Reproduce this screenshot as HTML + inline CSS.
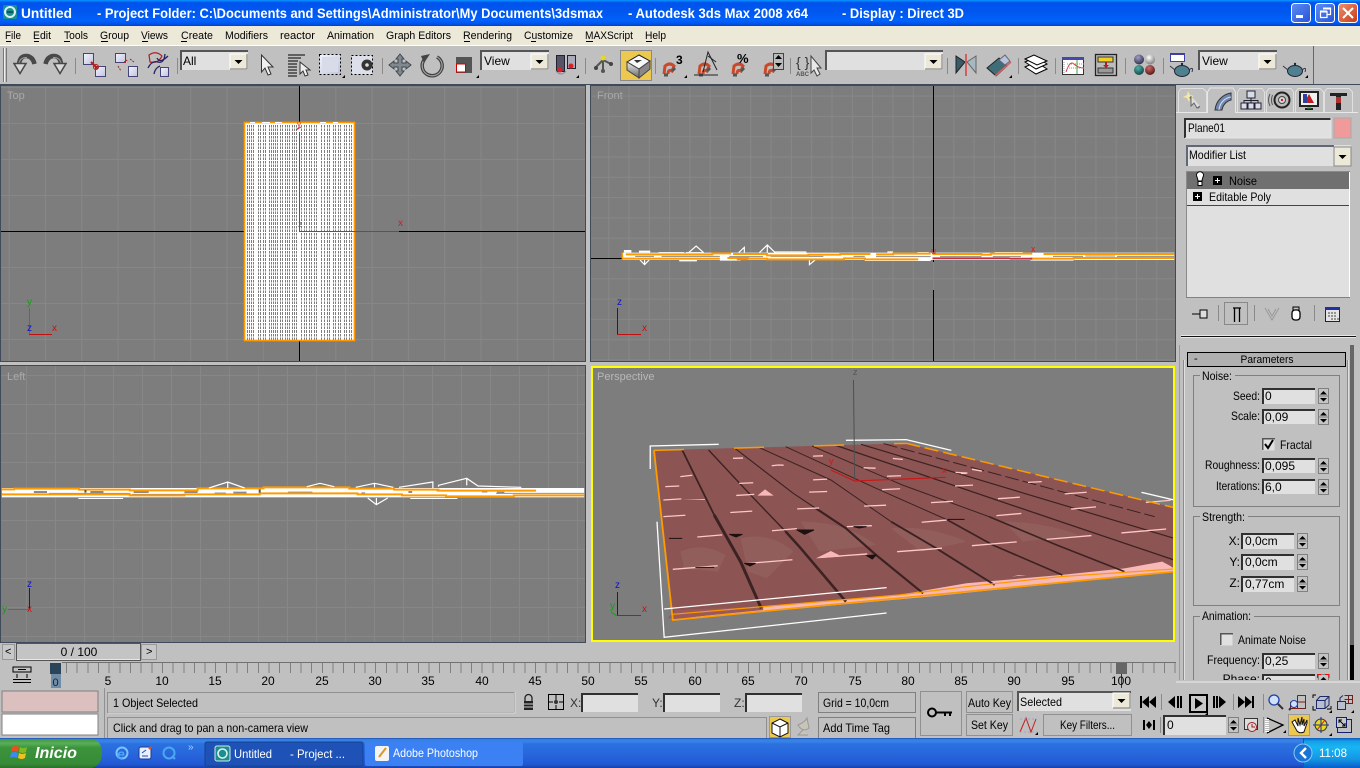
<!DOCTYPE html>
<html lang="en"><head><meta charset="utf-8"><title>3ds Max</title>
<style>
html,body{margin:0;padding:0;background:#c0c0c0;overflow:hidden}
svg{display:block}
text{font-family:"Liberation Sans",sans-serif;font-size:11px;fill:#000}
.f{fill:#e0e0e0}
.d{fill:none;stroke:#303030;stroke-width:2}
.l{fill:none;stroke:#e6e6e6;stroke-width:1}
.b{fill:none;stroke:#808080;stroke-width:1}
.sep{stroke:#8a8a8a;stroke-width:1}
.n *{vector-effect:non-scaling-stroke}
.c{shape-rendering:crispEdges}
.w{fill:#fff;font-weight:bold;font-size:14px}
</style></head><body>
<svg width="1360" height="768" viewBox="0 0 1360 768" xmlns="http://www.w3.org/2000/svg">
<defs>
<linearGradient id="tb" x1="0" y1="0" x2="0" y2="1"><stop offset="0" stop-color="#0997ff"/><stop offset=".1" stop-color="#0053ee"/><stop offset=".5" stop-color="#0058f0"/><stop offset=".8" stop-color="#0062fb"/><stop offset=".92" stop-color="#0052e6"/><stop offset="1" stop-color="#0040d0"/></linearGradient>
<linearGradient id="task" x1="0" y1="0" x2="0" y2="1"><stop offset="0" stop-color="#1f4cb0"/><stop offset=".05" stop-color="#3682e5"/><stop offset=".12" stop-color="#3883e5"/><stop offset=".2" stop-color="#2b71e0"/><stop offset=".63" stop-color="#2663da"/><stop offset=".88" stop-color="#2258d5"/><stop offset="1" stop-color="#1941a5"/></linearGradient>
<linearGradient id="st" x1="0" y1="0" x2="0" y2="1"><stop offset="0" stop-color="#3c9a3c"/><stop offset=".15" stop-color="#5aae5a"/><stop offset=".3" stop-color="#3b943b"/><stop offset=".85" stop-color="#378b37"/><stop offset="1" stop-color="#2a702a"/></linearGradient>
<linearGradient id="tray" x1="0" y1="0" x2="0" y2="1"><stop offset="0" stop-color="#0c59b9"/><stop offset=".1" stop-color="#139ee9"/><stop offset=".3" stop-color="#18b5f2"/><stop offset=".7" stop-color="#1397e5"/><stop offset="1" stop-color="#095bc9"/></linearGradient>
<linearGradient id="wb" x1="0" y1="0" x2="1" y2="1"><stop offset="0" stop-color="#5f8df2"/><stop offset="1" stop-color="#2553d8"/></linearGradient>
<linearGradient id="wc" x1="0" y1="0" x2="1" y2="1"><stop offset="0" stop-color="#ee9070"/><stop offset="1" stop-color="#c83a14"/></linearGradient>
<linearGradient id="cube" x1="0" y1="0" x2="0" y2="1"><stop offset="0" stop-color="#eee"/><stop offset="1" stop-color="#666"/></linearGradient>
<linearGradient id="rb" x1="0" y1="0" x2="1" y2="1"><stop offset="0" stop-color="#f4f4ff"/><stop offset="1" stop-color="#c0c4dc"/></linearGradient>
<radialGradient id="m1" cx=".4" cy=".3" r=".8"><stop offset="0" stop-color="#a0a0c8"/><stop offset="1" stop-color="#22223c"/></radialGradient>
<radialGradient id="m2" cx=".4" cy=".3" r=".8"><stop offset="0" stop-color="#fff"/><stop offset="1" stop-color="#707070"/></radialGradient>
<radialGradient id="m3" cx=".4" cy=".3" r=".8"><stop offset="0" stop-color="#50b0a8"/><stop offset="1" stop-color="#0c3a3a"/></radialGradient>
<radialGradient id="m4" cx=".4" cy=".3" r=".8"><stop offset="0" stop-color="#d06868"/><stop offset="1" stop-color="#481010"/></radialGradient>
<pattern id="gt" patternUnits="userSpaceOnUse" x="299" y="231" width="36.3" height="36"><path d="M.5 0V36M0 .5H36.3" stroke="#878787" fill="none"/></pattern>
<pattern id="gf" patternUnits="userSpaceOnUse" x="933" y="258" width="20.3" height="20.3"><path d="M.5 0V21M0 .5H21" stroke="#878787" fill="none"/></pattern>
<pattern id="gl" patternUnits="userSpaceOnUse" x="26" y="491" width="29" height="29"><path d="M.5 0V29M0 .5H29" stroke="#878787" fill="none"/></pattern>
<g id="sp"><rect x=".5" y=".5" width="10" height="15" fill="#c4c4c4" stroke="#808080"/><path d="M1 8H10" stroke="#808080"/><path d="M5.500 3L9 6.500H2zM2 10H9L5.500 13.500z"/></g>
<g id="dd"><rect x="0" y="0" width="17" height="15" fill="#ece9d8"/><path d="M0 15V0H17" stroke="#fff" fill="none"/><path d="M17 0V15H0" stroke="#777" fill="none"/><path d="M4.500 6H12.500L8.500 10z"/></g>
</defs>

<!-- base -->
<rect width="1360" height="768" fill="#c0c0c0"/>

<!-- title bar -->
<rect width="1360" height="26" fill="url(#tb)"/>
<rect x="3" y="5" width="14" height="14" rx="2" fill="#1a8f8f"/><circle cx="10" cy="12" r="5" fill="none" stroke="#d8f0f0" stroke-width="2"/><path d="M7 12H13" stroke="#0c5a5a" stroke-width="2"/>
<text class="w" x="21" y="18" textLength="51" lengthAdjust="spacingAndGlyphs">Untitled</text>
<text class="w" x="97" y="18" textLength="506" lengthAdjust="spacingAndGlyphs">- Project Folder: C:\Documents and Settings\Administrator\My Documents\3dsmax</text>
<text class="w" x="628" y="18" textLength="180" lengthAdjust="spacingAndGlyphs">- Autodesk 3ds Max 2008 x64</text>
<text class="w" x="842" y="18" textLength="122" lengthAdjust="spacingAndGlyphs">- Display : Direct 3D</text>
<rect x="1291.500" y="3.500" width="19" height="19" rx="3" fill="url(#wb)" stroke="#fff"/><rect x="1296" y="15" width="7" height="3" fill="#fff"/>
<rect x="1315.500" y="3.500" width="19" height="19" rx="3" fill="url(#wb)" stroke="#fff"/><path d="M1323.500 8.500H1330.500V14.500H1327M1320.500 11.500H1327V17.500H1320.500Z" fill="none" stroke="#fff" stroke-width="1.200"/><path d="M1323 8.500H1331M1320 11.500H1327" stroke="#fff" stroke-width="2"/>
<rect x="1338.500" y="3.500" width="19" height="19" rx="3" fill="url(#wc)" stroke="#fff"/><path d="M1343 8L1353 18M1353 8L1343 18" stroke="#fff" stroke-width="2"/>

<!-- menu bar -->
<rect y="26" width="1360" height="19" fill="#ece9d8"/><rect y="45" width="1360" height="1" fill="#fff"/>
<g>
<text x="5" y="39" textLength="16" lengthAdjust="spacingAndGlyphs">File</text>
<text x="33" y="39" textLength="18" lengthAdjust="spacingAndGlyphs">Edit</text>
<text x="64" y="39" textLength="24" lengthAdjust="spacingAndGlyphs">Tools</text>
<text x="100" y="39" textLength="29" lengthAdjust="spacingAndGlyphs">Group</text>
<text x="141" y="39" textLength="27" lengthAdjust="spacingAndGlyphs">Views</text>
<text x="181" y="39" textLength="32" lengthAdjust="spacingAndGlyphs">Create</text>
<text x="225" y="39" textLength="43" lengthAdjust="spacingAndGlyphs">Modifiers</text>
<text x="280" y="39" textLength="35" lengthAdjust="spacingAndGlyphs">reactor</text>
<text x="327" y="39" textLength="47" lengthAdjust="spacingAndGlyphs">Animation</text>
<text x="386" y="39" textLength="65" lengthAdjust="spacingAndGlyphs">Graph Editors</text>
<text x="463" y="39" textLength="49" lengthAdjust="spacingAndGlyphs">Rendering</text>
<text x="524" y="39" textLength="49" lengthAdjust="spacingAndGlyphs">Customize</text>
<text x="585" y="39" textLength="48" lengthAdjust="spacingAndGlyphs">MAXScript</text>
<text x="645" y="39" textLength="21" lengthAdjust="spacingAndGlyphs">Help</text>
<path class="c" d="M6 41.500H11M34 41.500H39M64 41.500H70M101 41.500H108M142 41.500H148M181 41.500H187M464 41.500H470M531 41.500H536M586 41.500H593M646 41.500H652" stroke="#000"/>
</g>

<!-- toolbar -->
<rect y="46" width="1313" height="38" fill="#c0c0c0"/>
<path d="M1313.500 46V84" stroke="#666"/><path d="M0 84.500H1360" stroke="#3f4b5b"/>
<path d="M3.500 48V82M6.500 48V82" stroke="#777"/><path d="M4.500 48V82" stroke="#eee"/>
<path class="sep c" d="M75.500 58V74M177.500 58V74M382.500 58V74M585.500 58V74M655.500 58V74M790.500 58V74M947.500 58V74M1018.500 58V74M1055.500 58V74M1125.500 58V74M1163.500 58V74"/>

<!-- undo / redo -->
<g id="und"><path d="M19 64Q20 55.500 27 56Q33 57 34.500 64" fill="none" stroke="#484848" stroke-width="4.500"/><path d="M19 63Q20.500 57 27 57.500" fill="none" stroke="#9a9a9a" stroke-width="1"/><path d="M14 63.500H26L20 73.500Z" fill="#d8d8d8" stroke="#484848" stroke-width="1.500"/></g>
<use href="#und" transform="translate(80,0) scale(-1,1)"/>

<!-- link, unlink, bind -->
<rect x="83.500" y="53.500" width="10" height="11" fill="url(#rb)" stroke="#44447a"/><rect x="95.500" y="66.500" width="10" height="10" fill="url(#rb)" stroke="#44447a"/><path d="M91 62L98 69" stroke="#b02020" stroke-width="2"/><circle cx="96" cy="67" r="2.500" fill="none" stroke="#b02020"/>
<rect x="115.500" y="53.500" width="10" height="9" fill="url(#rb)" stroke="#44447a"/><rect x="128.500" y="66.500" width="9" height="10" fill="url(#rb)" stroke="#44447a"/><path d="M124 63Q126 58 128 62M118 66L121 71M130 59L134 62" stroke="#b02020" fill="none" stroke-dasharray="2 1"/>
<path d="M149 55Q156 50 162 56Q158 64 150 62Z" fill="none" stroke="#b02020" stroke-width="1.200"/><path d="M148 68Q152 60 158 62T165 54M157 58Q160 64 168 56M154 74Q155 68 160 66" fill="none" stroke="#24246a" stroke-width="1.300"/><rect x="160.500" y="67.500" width="8" height="9" fill="url(#rb)" stroke="#44447a"/>

<!-- All dropdown -->
<rect x="180" y="50" width="68" height="20" class="f"/><path class="c" d="M181 70V51H248" fill="none" stroke="#555" stroke-width="2"/>
<text x="183" y="65" style="font-size:12px">All</text><use href="#dd" x="230" y="54"/>

<!-- select -->
<path d="M261.500 55V72L265 68L268 75L271 74L268 67L273 67Z" fill="#f0f0f0" stroke="#333"/>
<path class="c" d="M288 55H305M288 58H301M288 61H298M288 64H297M288 67H297M288 70H297M288 73H297M288 76H297" stroke="#000"/><path d="M300 62V74L303 71L305 76L308 75L306 70L310 70Z" fill="#f0f0f0" stroke="#333"/>
<rect x="319.500" y="54.500" width="21" height="20" fill="url(#rb)" stroke="#000" stroke-dasharray="2 2"/><rect x="322" y="57" width="16" height="15" fill="#d8dce8"/><path d="M342 78L345 78L345 75Z"/>
<rect x="351.500" y="55.500" width="21" height="19" fill="#dde0ea" stroke="#000" stroke-dasharray="2 2"/><circle cx="367" cy="65" r="5.500" fill="#333"/><circle cx="367" cy="65" r="1.800" fill="#ddd"/>
<!-- move -->
<path d="M400 54L404 59H402V63H406V61L411 65L406 69V67H402V71H404L400 76L396 71H398V67H394V69L389 65L394 61V63H398V59H396Z" fill="#808890" stroke="#404850"/>
<!-- rotate -->
<path d="M424 60A10 10 0 1 0 437 57" fill="none" stroke="#404040" stroke-width="3.500"/><path d="M424 60A10 10 0 1 0 437 57" fill="none" stroke="#a0a0a0" stroke-width="1.200"/><path d="M430 54L424 63L421 56Z" fill="#444"/>
<!-- scale -->
<rect x="456" y="57" width="16" height="16" fill="#555"/><rect x="456.500" y="64" width="9" height="8" fill="#fff" stroke="#c00"/><path d="M476 78L479 78L479 75Z"/>
<!-- View dd -->
<rect x="480" y="50" width="69" height="20" class="f"/><path class="c" d="M481 70V51H549" fill="none" stroke="#555" stroke-width="2"/>
<text x="484" y="65" style="font-size:12px">View</text><use href="#dd" x="531" y="54"/>
<!-- use pivot -->
<rect x="556.500" y="55.500" width="8" height="16" fill="#556" stroke="#223"/><rect x="567.500" y="55.500" width="8" height="13" fill="#aab" stroke="#223"/><circle cx="560" cy="70" r="2.500" fill="#e02020"/><circle cx="571" cy="66" r="2.500" fill="#e02020"/><path d="M556 71Q561 77 566 71" fill="none" stroke="#88a"/><path d="M576 78L579 78L579 75Z"/>
<!-- manipulate -->
<path d="M603 60L596 67M603 60L611 64M603 60V71" stroke="#555" stroke-width="2"/><circle cx="603" cy="58" r="2.500" fill="#e8d820"/><circle cx="596" cy="68" r="2" fill="#444"/><circle cx="611" cy="64" r="2" fill="#444"/><circle cx="603" cy="71" r="2" fill="#555"/>
<!-- keyboard cube (active) -->
<rect x="620.500" y="50.500" width="31" height="30" fill="#edc850" stroke="#8a8a8a"/>
<path d="M627 62L639 55L650 61L639 69Z" fill="#f8f8f8" stroke="#222"/><path d="M627 62V70L639 78V69Z" fill="url(#cube)" stroke="#444"/><path d="M639 69V78L650 69V61Z" fill="#888" stroke="#444"/><path d="M634 60L642 60L637 63Z" fill="#333"/>
<!-- snaps -->
<g id="mag"><path d="M664 74L665 66Q670 62 674 66L672 71Q668 69 668 74" fill="none" stroke="#c84a2a" stroke-width="3"/><path d="M664 75L668 75M672 71L675 68" stroke="#555" stroke-width="3"/></g>
<text x="676" y="64" style="font-size:12px;font-weight:bold">3</text><path d="M684 78L687 78L687 75Z"/>
<use href="#mag" x="35"/><path d="M694 75H718M703 72L708 52L717 70" fill="none" stroke="#222"/><path d="M708 56L716 62" stroke="#222"/>
<use href="#mag" x="69"/><text x="737" y="63" style="font-size:13px;font-weight:bold">%</text>
<use href="#mag" x="101"/><rect x="773.500" y="53.500" width="10" height="16" fill="#bbb" stroke="#444"/><path d="M778.500 55L782 59H775ZM775 63H782L778.500 67Z"/>
<!-- named sel -->
<text x="796" y="67" style="font-size:14px;fill:#333">{ }</text><text x="796" y="76" style="font-size:6px;font-weight:bold;fill:#555">ABC</text><path d="M811 56V73L814 70L817 76L820 74L817 68L821 68Z" fill="#e8e8e8" stroke="#444"/>
<rect x="825" y="50" width="118" height="20" class="f"/><path class="c" d="M826 70V51H943" fill="none" stroke="#555" stroke-width="2"/><use href="#dd" x="925" y="54"/>
<!-- mirror -->
<path d="M956 56L965 62L956 73Z" fill="#3a5a6a" stroke="#222"/><path d="M976 56L967 62L976 73Z" fill="#a8b8c0" stroke="#666"/><path d="M966 54V76" stroke="#d06060" stroke-width="2"/>
<!-- align -->
<path d="M987 68L999 58L1007 66L996 76Z" fill="#3f6e78" stroke="#222"/><path d="M999 60L1005 55L1010 61L1005 65Z" fill="#b8c4dc" stroke="#667"/><path d="M995 76L1011 62" stroke="#d86060" stroke-width="1.500"/><path d="M1009 78L1012 78L1012 75Z"/>
<!-- layers -->
<path d="M1025 67L1036 62L1047 69L1036 74Z" fill="#fff" stroke="#000"/><path d="M1025 62L1036 57L1047 64L1036 69Z" fill="#fff" stroke="#000"/><path d="M1025 59L1034 55L1047 61L1037 65Z" fill="#fff" stroke="#000"/>
<!-- curve editor -->
<rect x="1062.500" y="57.500" width="21" height="17" fill="#fff" stroke="#333"/><rect x="1062" y="57" width="22" height="3" fill="#4848a8"/><path d="M1066 72Q1070 60 1074 64T1084 68" fill="none" stroke="#d04040"/><path d="M1077 60V74" stroke="#40a040"/><path d="M1064 62V74M1067 64H1084M1067 68H1084" stroke="#9090b0" stroke-dasharray="1 1"/>
<!-- schematic -->
<rect x="1095.500" y="54.500" width="21" height="21" fill="#bcbcbc" stroke="#222" stroke-width="1.300"/><rect x="1098" y="57" width="15" height="5" fill="#f0d020" stroke="#333"/><rect x="1098" y="68" width="15" height="5" fill="#9a9a9a" stroke="#333"/><path d="M1106 62V67" stroke="#b02020" stroke-width="2"/><path d="M1103 65H1109L1106 68Z" fill="#b02020"/>
<!-- material -->
<circle cx="1139" cy="59.500" r="5" fill="url(#m1)"/><circle cx="1150" cy="59.500" r="5" fill="url(#m2)"/><circle cx="1139" cy="70" r="5" fill="url(#m3)"/><circle cx="1150" cy="70" r="5" fill="url(#m4)"/>
<!-- render setup -->
<rect x="1170.500" y="53.500" width="14" height="8" fill="#fff" stroke="#4040a0"/><rect x="1170" y="53" width="15" height="2" fill="#4040a0"/>
<g id="pot"><ellipse cx="1182" cy="71" rx="7.500" ry="5.500" fill="#4e8090" stroke="#223"/><path d="M1175 70L1170 66M1189 70Q1194 66 1192 72" fill="none" stroke="#335"/><circle cx="1182" cy="64" r="1.200" fill="#223"/></g>
<rect x="1198" y="50" width="79" height="20" class="f"/><path class="c" d="M1199 70V51H1277" fill="none" stroke="#555" stroke-width="2"/><text x="1202" y="65" style="font-size:12px">View</text><use href="#dd" x="1259" y="54"/>
<use href="#pot" x="113"/><path d="M1305 78L1308 78L1308 75Z"/>

<!-- viewport frame -->
<rect x="0" y="85" width="586" height="277" fill="#3f4b5b"/><rect x="590" y="85" width="586" height="277" fill="#3f4b5b"/><rect x="0" y="365" width="586" height="278" fill="#3f4b5b"/>

<!-- TOP -->
<rect x="1" y="86" width="584" height="275" fill="#7d7d7d"/><rect x="1" y="86" width="584" height="275" fill="url(#gt)"/>
<path class="c" d="M299.500 86V361M1 231.500H585" stroke="#000"/>
<rect x="244" y="122" width="111" height="219" fill="#fff"/>
<path class="c" stroke="#7d7d7d" stroke-dasharray="2.600 1" fill="none" d="M247.500 125V340M249.500 125V340M251.500 125V340M253.500 125V340M258.500 125V340M260.500 125V340M263.500 125V340M265.500 125V340M269.500 125V340M271.500 125V340M273.500 125V340M275.500 125V340M277.500 125V340M280.500 125V340M282.500 125V340M285.500 125V340M287.500 125V340M289.500 125V340M292.500 125V340M294.500 125V340M296.500 125V340M301.500 125V340M304.500 125V340M306.500 125V340M309.500 125V340M311.500 125V340M314.500 125V340M316.500 125V340M321.500 125V340M324.500 125V340M327.500 125V340M329.500 125V340M333.500 125V340M335.500 125V340M338.500 125V340M340.500 125V340M344.500 125V340M346.500 125V340M349.500 125V340M351.500 125V340"/>
<rect x="244.500" y="122.500" width="110" height="218" fill="none" stroke="#ff9a00" stroke-width="1.600"/>
<path class="c" d="M250 122.500H255M262 122.500H270M275 122.500H282M320 122.500H326M333 122.500H338" stroke="#fff"/>
<path class="c" d="M299.500 132V231.500M299 231.500H399" fill="none" stroke="#d82020"/>
<path d="M296 130L301 127" stroke="#d02020"/>
<text x="297" y="127" style="font-size:8px;fill:#d02020">y</text><text x="398" y="226" style="font-size:10px;fill:#d02020">x</text><text x="298" y="227" style="font-size:9px;fill:#666">z</text>
<path class="c" d="M29.500 334V308" stroke="#10a010"/><path class="c" d="M29 334.500H52" stroke="#c01010"/>
<text x="27" y="305" style="font-size:10px;fill:#10a010">y</text><text x="27" y="331" style="font-size:10px;fill:#1010d0">z</text><text x="52" y="331" style="font-size:10px;fill:#d01010">x</text>
<text x="7" y="99" style="fill:#a9a9a9">Top</text>

<!-- FRONT -->
<rect x="591" y="86" width="584" height="275" fill="#7d7d7d"/><rect x="591" y="86" width="584" height="275" fill="url(#gf)"/>
<path class="c" d="M933.500 86V262M933.500 290V361M591 258.500H622" stroke="#000"/><path class="c" d="M933.500 262V290" stroke="#c87a10"/>
<g class="n" transform="translate(590,230) scale(.3764,.3333)">
<rect x="85" y="68" width="1467" height="22" fill="#fff"/>
<path d="M90 60H110V68H90ZM130 62H160V68H130ZM182 66H250V68H182ZM255 66H300V68H255ZM490 64H575V68H490ZM790 64H805V68H790ZM870 66H900V68H870ZM1075 66H1150V68H1075ZM237 90H284V94H237ZM345 90H400V92H345ZM730 90H905V93H730ZM1170 90H1285V92H1170Z" fill="#fff"/>
<path d="M262 68L282 48L302 68M395 68L410 52V68M450 68L471 45L492 68M471 45V68M133 90L145 104L157 90M145 90V104M583 90V104L598 90" fill="none" stroke="#fff" stroke-width="1.200"/>
<path d="M120 79H170M190 79H345M370 80H460M480 79H620M700 79H730M760 80H905M930 80H1040M1070 80H1145M1230 79H1310M1316 78H1395M1400 79H1552" stroke="#8a8a8a" stroke-width="1" fill="none"/>
<path d="M95 73H325V70H375M380 72H470V76H580V74H665V72H745M760 73H805V71H905M910 72H1040V74H1065V71H1175M1205 72H1552M85 86H345M365 84H420V86H470V88H675V85H730V88H872M1170 86H1285V84H1552" fill="none" stroke="#ff9a00" stroke-width="2"/>
<path d="M390 87H420" stroke="#ff8a00" stroke-width="2.500"/>
<path d="M910 85H1115M1115 86H1175" stroke="#c83040" stroke-width="1.800"/>
<path d="M86 68V90" stroke="#ff9a00" stroke-width="1.500"/>
</g>
<text x="931" y="254" style="font-size:9px;fill:#d02020">u</text><text x="1031" y="252" style="font-size:9px;fill:#d02020">x</text>
<path class="c" d="M617.500 334V308" stroke="#1010c0"/><path class="c" d="M617 334.500H641" stroke="#c01010"/>
<text x="617" y="305" style="font-size:10px;fill:#1010d0">z</text><text x="642" y="331" style="font-size:10px;fill:#d01010">x</text>
<text x="597" y="99" style="fill:#a9a9a9">Front</text>

<!-- LEFT -->
<rect x="1" y="366" width="584" height="276" fill="#7d7d7d"/><rect x="1" y="366" width="584" height="276" fill="url(#gl)"/>
<g class="n" transform="translate(0,470) scale(.3764,.3333)">
<rect x="5" y="54" width="1547" height="28" fill="#fff"/>
<path d="M90 66H125M240 66H275M355 66H395M490 66H525M620 68H655M765 68H830M960 70H970M1085 66H1095M1320 68H1340" stroke="#8a8a8a" stroke-width="2" fill="none"/>
<path d="M130 70H345M350 73H490M570 69H600M1160 63H1180M1280 66H1295M1318 70H1552" stroke="#909090" stroke-width="1" fill="none"/>
<path d="M5 58H40M36 56H210V59H345V61H525V55H700V52H928V56H1047V59H1165V62H1424M5 73H345V76H490V73H690V70H950V73H1068V76H1185V79H1365V76H1552" fill="none" stroke="#ff9a00" stroke-width="2"/>
<path d="M208 84H327V87H208ZM1090 84H1215V87H1090Z" fill="#fff"/>
<path d="M555 54L605 36L650 54M605 36V54M815 50L850 40L888 50M945 52L995 40L1045 52M995 40V52M1060 52L1150 36V54M1165 50V46L1240 25L1270 48L1385 52M1240 25V46M977 84L1000 104L1030 84M1000 84V104" fill="none" stroke="#fff" stroke-width="1.200"/>
<path d="M227 60V68M690 58V68" stroke="#555" stroke-width="2"/>
</g>
<path class="c" d="M29.500 609V588" stroke="#1010c0"/><path class="c" d="M8 609.500H29" stroke="#10a010"/>
<text x="27" y="587" style="font-size:10px;fill:#1010d0">z</text><text x="2" y="612" style="font-size:10px;fill:#10a010">y</text><text x="27" y="612" style="font-size:10px;fill:#d01010">x</text>
<text x="7" y="380" style="fill:#a9a9a9">Left</text>

<!-- PERSPECTIVE -->
<rect x="591" y="366" width="584" height="276" fill="#7d7d7d"/>
<g class="n" transform="translate(590,365) scale(.3764,.3333)">
<path d="M170 256L840 235L1552 428V620L220 765Z" fill="#8c5554"/>
<path d="M240 560Q300 530 360 570L340 620L250 610ZM400 520Q480 500 540 560L470 640L420 620ZM560 470Q680 470 760 540L610 560ZM800 490Q900 480 1000 530L880 560ZM1100 470Q1200 470 1300 510L1150 530Z" fill="#94605e" opacity=".8"/>
<path d="M470 725L820 690L1000 655L1250 630L1420 610L1520 590L1552 610V620L900 695L220 765Z" fill="#f8b8b8"/>
<path d="M205 760L230 735L460 725L460 735L240 760Z" fill="#9a5a5a"/>
<!-- seams -->
<g fill="none" stroke="#3c2222">
<path d="M245 255L330 450L400 590" stroke-width="1.800"/><path d="M330 450L400 590L455 730" stroke-width="3"/>
<path d="M315 255L435 400L520 500" stroke-width="1.400"/><path d="M520 500L560 550L680 710" stroke-width="2.600"/>
<path d="M385 250L540 385L600 430" stroke-width="1.200"/><path d="M600 430L680 490L760 570L885 685" stroke-width="2.200"/>
<path d="M450 248L640 345L800 470" stroke-width="1"/><path d="M800 470L920 550L1075 660" stroke-width="1.900"/>
<path d="M520 245L760 370L950 465" stroke-width="1"/><path d="M950 465L1070 540L1255 630" stroke-width="1.700"/>
<path d="M590 243L830 360L1060 455" stroke-width="1"/><path d="M1060 455L1240 540L1420 620" stroke-width="1.600"/>
<path d="M650 240L1250 470L1552 585" stroke-width="1.300"/>
<path d="M720 238L1552 520" stroke-width="1.200"/>
<path d="M780 236L1500 455" stroke-width="1" stroke-dasharray="14 4"/>
</g>
<!-- pale rows -->
<g fill="none" stroke="#ffc8c8" stroke-width="1.300">
<path d="M220 613L400 597L640 575L900 553L1350 510L1552 490" stroke-dasharray="45 30"/>
<path d="M285 516L560 490L800 480L1150 445L1552 405" stroke-dasharray="25 50"/>
<path d="M195 455L480 435L800 420L1100 400L1400 375" stroke-dasharray="22 45"/>
<path d="M195 405L480 385L760 375L1200 350" stroke-dasharray="18 55"/>
<path d="M200 365L500 350L760 335L1000 325" stroke-dasharray="14 60"/>
<path d="M240 335L500 300L770 310L1020 325" stroke-dasharray="12 80"/>
<path d="M380 280L700 270L900 290L1200 350" stroke-dasharray="10 70"/>
</g>
<path d="M445 392L465 373L488 392ZM600 580L640 558L670 575ZM245 405H305V402ZM1120 635L1140 630H1160ZM1490 605L1520 590L1545 605Z" fill="#f8b8b8"/>
<path d="M550 495H595L570 508ZM370 508H405L388 516ZM700 485H735L715 489ZM410 595H440L425 603ZM735 572L760 570L750 582ZM210 520H245M950 463H995M280 607H330" fill="#1d1010" stroke="#1d1010"/>
<!-- orange -->
<path d="M170 256L220 765L1552 620" fill="none" stroke="#ff9a00" stroke-width="1.800"/>
<path d="M220 748L460 725L820 690L1000 665L1250 635L1552 612" fill="none" stroke="#ff9a00" stroke-width="1.200"/>
<path d="M840 235L1552 428" fill="none" stroke="#ff9a00" stroke-width="1.500" stroke-dasharray="14 5"/>
<path d="M170 256L840 235" fill="none" stroke="#ff9a00" stroke-width="1.500" stroke-dasharray="30 50"/>
<!-- white bbox -->
<g fill="none" stroke="#fff" stroke-width="1.300">
<path d="M160 312V243L342 238"/><path d="M680 226L840 224L960 256"/><path d="M1465 382L1552 405"/>
<path d="M178 470L197 817L788 744"/><path d="M197 732L788 668"/>
</g>
<!-- gizmo -->
<path d="M700 45L703 345" stroke="#505050" stroke-width="1"/>
<path d="M640 315L703 348L945 337" fill="none" stroke="#c81818" stroke-width="1.200"/>
</g>
<rect x="592" y="367" width="582" height="274" fill="none" stroke="#ffff00" stroke-width="2"/>
<text x="597" y="380" style="fill:#b8b8b8">Perspective</text>
<text x="853" y="375" style="font-size:9px;fill:#555">z</text>
<text x="829" y="464" style="font-size:9px;fill:#c81818">y</text><text x="942" y="473" style="font-size:9px;fill:#c81818">x</text>
<path class="c" d="M617.500 616V592" stroke="#1010c0"/><path class="c" d="M617 615.500H641" stroke="#c01010"/><path d="M617 616L611 612" stroke="#10a010"/>
<text x="615" y="588" style="font-size:10px;fill:#1010d0">z</text><text x="610" y="609" style="font-size:10px;fill:#10a010">y</text><text x="642" y="612" style="font-size:10px;fill:#d01010">x</text>

<!-- time slider -->
<rect x="2.500" y="644.500" width="12" height="15" fill="#c8c8c8" stroke="#999"/><text x="5" y="655">&lt;</text>
<rect x="16.500" y="643.500" width="124" height="17" fill="#c4c4c4" stroke="#555"/><path d="M17 659.500H140" stroke="#e8e8e8"/><text x="79" y="656" text-anchor="middle" style="font-size:12px">0 / 100</text>
<rect x="141.500" y="644.500" width="15" height="15" fill="#c8c8c8" stroke="#999"/><text x="146" y="655">&gt;</text>

<!-- track -->
<path class="c" d="M62 662.500H1176" stroke="#707070"/>
<path class="c" d="M66 668H1176" stroke="#808080" stroke-width="10" stroke-dasharray="1 9.660"/>
<rect x="13" y="667" width="18" height="5" fill="none" stroke="#000"/><path d="M18 669.500H26" stroke="#000"/><path d="M13 682.500H31M13 679.500H31" stroke="#000"/><path d="M17 674V678M27 674V678" stroke="#000"/>
<rect x="50" y="663" width="11" height="11" fill="#2b4458"/><rect x="51" y="674" width="10" height="14" fill="#6f8ca8"/><text x="55.500" y="686" text-anchor="middle" style="font-size:11px;fill:#222">0</text>
<rect x="1116" y="663" width="11" height="11" fill="#666"/><path d="M1121.500 674V688" stroke="#333"/>
<g text-anchor="middle">
<text x="108" y="685" style="font-size:12px">5</text><text x="162" y="685" style="font-size:12px">10</text><text x="215" y="685" style="font-size:12px">15</text><text x="268" y="685" style="font-size:12px">20</text><text x="322" y="685" style="font-size:12px">25</text><text x="375" y="685" style="font-size:12px">30</text><text x="428" y="685" style="font-size:12px">35</text><text x="482" y="685" style="font-size:12px">40</text><text x="535" y="685" style="font-size:12px">45</text><text x="588" y="685" style="font-size:12px">50</text><text x="641" y="685" style="font-size:12px">55</text><text x="695" y="685" style="font-size:12px">60</text><text x="748" y="685" style="font-size:12px">65</text><text x="801" y="685" style="font-size:12px">70</text><text x="855" y="685" style="font-size:12px">75</text><text x="908" y="685" style="font-size:12px">80</text><text x="961" y="685" style="font-size:12px">85</text><text x="1014" y="685" style="font-size:12px">90</text><text x="1068" y="685" style="font-size:12px">95</text><text x="1121" y="685" style="font-size:12px">100</text>
</g>

<!-- status -->
<rect x="2" y="691" width="96" height="21" fill="#dcc0c0" stroke="#808080"/><rect x="2" y="714" width="96" height="21" fill="#fff" stroke="#808080"/>
<path class="c" d="M104.500 688V738" stroke="#909090"/>
<rect x="107.500" y="692.500" width="407" height="20" fill="#c0c0c0" stroke="#909090"/><path class="c" d="M108 713H515V692" fill="none" stroke="#dcdcdc"/>
<text x="113" y="707" style="font-size:12px" textLength="85" lengthAdjust="spacingAndGlyphs">1 Object Selected</text>
<rect x="107.500" y="717.500" width="659" height="21" fill="#c0c0c0" stroke="#909090"/>
<text x="113" y="732" style="font-size:12px" textLength="195" lengthAdjust="spacingAndGlyphs">Click and drag to pan a non-camera view</text>
<!-- lock -->
<rect x="524" y="701" width="9" height="9" fill="#222"/><path d="M525 701V698A3 3 0 0 1 532 698V701" fill="none" stroke="#222" stroke-width="1.300"/><path d="M524 704H533M524 707H533" stroke="#ccc"/>
<!-- abs -->
<rect x="548.500" y="694.500" width="15" height="15" fill="none" stroke="#000"/><path d="M556 695V700M556 705V710M549 702H553M559 702H564" stroke="#000"/><circle cx="556" cy="702" r="2" fill="#333"/>
<text x="570" y="707" style="font-size:12px;fill:#333">X:</text><text x="652" y="707" style="font-size:12px;fill:#333">Y:</text><text x="734" y="707" style="font-size:12px;fill:#333">Z:</text>
<rect x="582" y="693" width="56" height="19" class="f"/><path class="d c" d="M582 712V694H638"/>
<rect x="664" y="693" width="56" height="19" class="f"/><path class="d c" d="M664 712V694H720"/>
<rect x="746" y="693" width="56" height="19" class="f"/><path class="d c" d="M746 712V694H802"/>
<rect x="818.500" y="692.500" width="97" height="20" fill="#c0c0c0" stroke="#808080"/><text x="823" y="707" style="font-size:12px" textLength="66" lengthAdjust="spacingAndGlyphs">Grid = 10,0cm</text>
<rect x="818.500" y="717.500" width="97" height="21" fill="#c0c0c0" stroke="#808080"/><text x="823" y="732" style="font-size:12px" textLength="67" lengthAdjust="spacingAndGlyphs">Add Time Tag</text>
<!-- cube -->
<rect x="769.500" y="716.500" width="21" height="21" fill="#edc850" stroke="#999"/><path d="M780 719L788 723V733L780 737L772 733V723Z" fill="#fff" stroke="#111"/><path d="M772 723L780 727L788 723M780 727V737" fill="none" stroke="#111"/>
<path d="M798 725Q805 722 807 718L809 728Q803 733 798 725ZM803 730L798 735H808" fill="#c8c4b8" stroke="#999"/>
<!-- key btn -->
<rect x="920.500" y="691.500" width="41" height="44" fill="#c0c0c0" stroke="#909090"/><circle cx="932" cy="712.500" r="4" fill="none" stroke="#000" stroke-width="2"/><path d="M936 712.500H952M945 713V716M950 713V716" stroke="#000" stroke-width="2"/>
<rect x="966.500" y="691.500" width="46" height="21" fill="#c0c0c0" stroke="#909090"/><text x="968" y="707" style="font-size:12px" textLength="43" lengthAdjust="spacingAndGlyphs">Auto Key</text>
<rect x="966.500" y="714.500" width="46" height="21" fill="#c0c0c0" stroke="#909090"/><text x="971" y="729" style="font-size:12px" textLength="37" lengthAdjust="spacingAndGlyphs">Set Key</text>
<rect x="1017" y="691" width="114" height="20" class="f"/><path class="c" d="M1018 711V692H1131" fill="none" stroke="#555" stroke-width="2"/><text x="1020" y="706" style="font-size:12px" textLength="42" lengthAdjust="spacingAndGlyphs">Selected</text><use href="#dd" x="1113" y="693"/>
<path d="M1020 732L1026 718L1031 732L1036 719" fill="none" stroke="#c02020"/><path d="M1020 719H1037M1020 732H1037" stroke="#a0a0d0" stroke-dasharray="2 2"/><path d="M1035 735L1038 735L1038 732Z"/>
<rect x="1043.500" y="714.500" width="88" height="21" fill="#c0c0c0" stroke="#909090"/><text x="1060" y="729" style="font-size:12px" textLength="55" lengthAdjust="spacingAndGlyphs">Key Filters...</text>
<!-- playback -->
<path class="sep c" d="M1161.500 694V710M1233.500 694V710M1263.500 694V710M1160.500 717V733M1263.500 717V733"/>
<path d="M1140 696H1142V708H1140ZM1149 696V708L1142 702ZM1156 696V708L1149 702Z"/>
<path d="M1175 696V708L1168 702ZM1177 696H1179V708H1177ZM1180 696H1182V708H1180Z"/>
<rect x="1190" y="695" width="17" height="17" fill="#c8c8c8" stroke="#000" stroke-width="2"/><path d="M1195 698V709L1203 703.500Z"/><path d="M1205 715L1208 715L1208 712Z"/>
<path d="M1213 696H1215V708H1213ZM1216 696H1218V708H1216ZM1219 696V708L1226 702Z"/>
<path d="M1238 696V708L1245 702ZM1245 696V708L1252 702ZM1252 696H1254V708H1252Z"/>
<path d="M1143 720H1145V730H1143ZM1153 720H1155V730H1153ZM1146 725L1149 721V729ZM1152 725L1149 721V729Z"/>
<rect x="1164" y="715" width="62" height="20" class="f"/><path class="d c" d="M1164 735V716H1226"/><text x="1167" y="729" style="font-size:12px">0</text>
<use href="#sp" x="1228" y="717"/>
<rect x="1244.500" y="718.500" width="13" height="11" fill="#ddd" stroke="#333"/><circle cx="1252" cy="727" r="4.500" fill="#ddd" stroke="#a02020"/><path d="M1252 724V727H1255" fill="none" stroke="#a02020"/>
<!-- nav -->
<circle cx="1274" cy="700" r="5" fill="#cfe0ff" stroke="#2040a0" stroke-width="1.300"/><path d="M1278 704L1283 709" stroke="#333" stroke-width="2"/>
<path d="M1297.500 695.500H1305.500V708.500H1290.500V702M1297.500 695.500V708.500M1290.500 702H1305.500" fill="none" stroke="#702020"/><circle cx="1294" cy="704" r="3.500" fill="#cfe0ff" stroke="#2040a0"/><path d="M1291 708L1289 710" stroke="#333" stroke-width="2"/>
<path d="M1316.500 700.500L1320 696.500H1329V705L1325 708.500H1316.500ZM1316.500 700.500H1325V708.500M1325 700.500L1329 696.500" fill="#b8c0d0" stroke="#202868"/><path d="M1313 698V695H1316M1327 709H1331V706M1313 706V710H1316" fill="none" stroke="#000"/><path d="M1329 713L1332 713L1332 710Z"/>
<path d="M1337.500 701.500H1345.500V709.500H1337.500ZM1340 701V698L1343 695.500" fill="#b8c0d0" stroke="#202868"/><path d="M1344.500 695.500H1352.500V703.500H1345M1348.500 695.500V703.500M1344.500 699.500H1352.500" fill="none" stroke="#702020"/><path d="M1351 713L1354 713L1354 710Z"/>
<path d="M1267 718L1283 725L1267 733" fill="#bbb" stroke="#000" stroke-width="1.300"/><path d="M1267 719V732" stroke="#fff" stroke-dasharray="1 1" stroke-width="4"/><path d="M1283 733L1286 733L1286 730Z"/>
<rect x="1288.500" y="714.500" width="21" height="21" fill="#edc850" stroke="#999"/><path d="M1292 722L1297 731Q1300 734 1304 732L1307 723V720L1304 726V719L1302 725V717L1300 725L1298 718V726L1295 720Z" fill="#fff" stroke="#111"/>
<circle cx="1321" cy="725" r="6" fill="#e8d820" stroke="#333"/><path d="M1321 717V733M1313 725H1329" stroke="#1030a0"/><path d="M1317 730L1325 720" stroke="#b02020"/><path d="M1329 736L1332 736L1332 733Z"/>
<rect x="1337.500" y="719.500" width="14" height="13" fill="none" stroke="#102070"/><rect x="1336.500" y="717.500" width="10" height="10" fill="#c8c8c8" stroke="#102070"/><path d="M1339 720L1345 726M1339 723V720H1342M1345 723V726H1342" fill="none" stroke="#000"/>

<!-- command panel -->
<rect x="1176" y="85" width="184" height="600" fill="#c0c0c0"/>
<g fill="#c0c0c0" stroke="#e0e0e0">
<path d="M1178.500 112V92L1181 88.500H1203L1206.500 92V112"/>
<path d="M1237.500 112V92L1240 88.500H1262L1264.500 92V112"/>
<path d="M1266.500 112V92L1269 88.500H1291L1293.500 92V112"/>
<path d="M1295.500 112V92L1298 88.500H1320L1323.500 92V112"/>
<path d="M1324.500 112V92L1327 88.500H1349L1352.500 92V112"/>
</g>
<path d="M1176 112.500H1207.500V92L1210 88H1233L1235.500 92V112.500H1358" fill="#c0c0c0" stroke="#e8e8e8"/>
<!-- tab icons -->
<path d="M1188 91L1190 95L1194 96L1190 98L1189 102L1187 98L1183 97L1187 95Z" fill="#f4e8a0"/><path d="M1190 97L1199 108" stroke="#666" stroke-width="2"/><path d="M1191 96V106L1194 103L1197 108L1200 106" fill="#ddd" stroke="#666"/>
<path d="M1215 110A19 19 0 0 1 1231 93V100A12 12 0 0 0 1222 110Z" fill="#7088b0" stroke="#333"/><path d="M1219 110A14 14 0 0 1 1231 97" fill="none" stroke="#d8e0ee"/>
<rect x="1247" y="91" width="8" height="7" fill="#d8dce8" stroke="#223"/><rect x="1241" y="103" width="6" height="6" fill="#d8dce8" stroke="#223"/><rect x="1248" y="103" width="6" height="6" fill="#d8dce8" stroke="#223"/><rect x="1255" y="103" width="6" height="6" fill="#d8dce8" stroke="#223"/><path d="M1251 98V103M1244 103V100.500H1258V103" fill="none" stroke="#223"/>
<circle cx="1282" cy="100" r="7.500" fill="#bbb" stroke="#222" stroke-width="2"/><circle cx="1282" cy="100" r="3.500" fill="#ddd" stroke="#444"/><circle cx="1282" cy="100" r="1.200" fill="#d02020"/><path d="M1270 94Q1267 100 1270 106M1272.500 95Q1270.500 100 1272.500 105" fill="none" stroke="#555"/>
<rect x="1300" y="92" width="18" height="14" fill="#f0f0f0" stroke="#222" stroke-width="2"/><path d="M1304 103L1309 94L1314 103Z" fill="#c02020"/><path d="M1303 94H1307V103H1303Z" fill="#3040a0"/><path d="M1305 109H1313" stroke="#222" stroke-width="2"/><path d="M1307 108H1311" stroke="#20a020"/>
<path d="M1330 93H1347V96H1341V110H1336V96H1330Z" fill="#222"/><path d="M1336 97H1341V103H1336Z" fill="#b03030"/>
<!-- name -->
<rect x="1184" y="118" width="147" height="20" class="f"/><path class="d c" d="M1185 138V119H1331"/><path class="l" d="M1331 118V138H1185"/>
<text x="1188" y="132" style="font-size:12px" textLength="37" lengthAdjust="spacingAndGlyphs">Plane01</text>
<rect x="1334" y="118" width="17" height="20" fill="#f09a9a" stroke="#aaa"/>
<!-- modifier list -->
<rect x="1186" y="145" width="165" height="21" class="f"/><path class="c" d="M1187 166V146H1334" fill="none" stroke="#606878" stroke-width="2"/>
<text x="1189" y="159" style="font-size:12px" textLength="57" lengthAdjust="spacingAndGlyphs">Modifier List</text>
<rect x="1334" y="147" width="17" height="19" fill="#ece9d8" stroke="#888"/><path d="M1338.500 155H1346.500L1342.500 159Z"/>
<!-- stack -->
<rect x="1186" y="171" width="164" height="126" fill="#e0e0e0"/><path class="c" d="M1186.500 297V171.500H1349.500V297" fill="none" stroke="#8a8a8a"/><path class="c" d="M1186 297.500H1350" stroke="#888070"/><path class="c" d="M1349.500 172V297" stroke="#fff"/>
<rect x="1187" y="172" width="162" height="17" fill="#707070"/>
<path class="c" d="M1187 205.500H1349" stroke="#444"/>
<path d="M1197 177A3.500 3.500 0 1 1 1203 177Q1202 180 1202 181H1198Q1198 180 1197 177Z" fill="#fff" stroke="#000"/><rect x="1198" y="181.500" width="4" height="4" fill="#fff" stroke="#000"/>
<rect x="1213" y="176" width="9" height="9" fill="#000"/><path d="M1215 180.500H1220M1217.500 178V183" stroke="#fff"/>
<text x="1229" y="185" style="font-size:12px" textLength="28" lengthAdjust="spacingAndGlyphs">Noise</text>
<rect x="1193" y="192" width="9" height="9" fill="#000"/><path d="M1195 196.500H1200M1197.500 194V199" stroke="#fff"/>
<text x="1209" y="201" style="font-size:12px" textLength="62" lengthAdjust="spacingAndGlyphs">Editable Poly</text>
<!-- stack buttons -->
<path d="M1192 314H1200M1200 310V318H1207V310Z" fill="#ddd" stroke="#000"/>
<path class="sep c" d="M1218.500 305V321M1254.500 305V321M1314.500 305V321"/>
<rect x="1224.500" y="302.500" width="23" height="22" fill="none" stroke="#888"/><path d="M1234.500 308V322M1239.500 308V322M1233 308H1241" stroke="#000" stroke-width="1.300"/>
<path d="M1265 308L1272 320L1279 308M1268 309L1272 316L1276 309" fill="none" stroke="#999"/>
<rect x="1292" y="310" width="8" height="10" rx="3" fill="#fff" stroke="#000" stroke-width="1.300"/><path d="M1293 307H1299V310H1293Z" fill="none" stroke="#000"/>
<rect x="1325.500" y="307.500" width="14" height="14" fill="#e4e4e4" stroke="#223"/><rect x="1325" y="307" width="15" height="3" fill="#2030a0"/><path d="M1328 313H1337M1328 316H1337M1331 319H1339" stroke="#444" stroke-dasharray="2 1"/>
<!-- separator -->
<path class="c" d="M1181 336.500H1356" stroke="#111"/><path class="c" d="M1181 335.500H1356" stroke="#e8e8e8"/><path class="c" d="M1181 337.500H1356" stroke="#e8e8e8"/>
<!-- rollout frame -->
<path class="c" d="M1179.500 345V680" stroke="#9a9a9a"/>
<path class="c" d="M1183.500 360V680M1347.500 360V680" stroke="#8c8c8c"/><path class="c" d="M1184.500 360V680M1348.500 360V680" stroke="#e0e0e0"/>
<rect x="1350" y="345" width="4" height="300" fill="#666"/><rect x="1350" y="645" width="4" height="35" fill="#000"/>
<rect x="1187.500" y="352.500" width="158" height="14" fill="#b0b0b0" stroke="#000"/>
<text x="1194" y="362">-</text><text x="1267" y="363" text-anchor="middle" textLength="53" lengthAdjust="spacingAndGlyphs">Parameters</text>
<!-- groups -->
<path class="b c" d="M1200 375.500H1193.500V506.500H1339.500V375.500H1235"/>
<text x="1202" y="380" style="font-size:12px" textLength="30" lengthAdjust="spacingAndGlyphs">Noise:</text>
<path class="b c" d="M1200 516.500H1193.500V605.500H1339.500V516.500H1248"/>
<text x="1202" y="521" style="font-size:12px" textLength="43" lengthAdjust="spacingAndGlyphs">Strength:</text>
<path class="b c" d="M1200 616.500H1193.500V680M1339.500 680V616.500H1254"/>
<text x="1202" y="620" style="font-size:12px" textLength="49" lengthAdjust="spacingAndGlyphs">Animation:</text>
<!-- noise rows -->
<text x="1233" y="400" style="font-size:12px" textLength="27" lengthAdjust="spacingAndGlyphs">Seed:</text>
<text x="1231" y="420" style="font-size:12px" textLength="29" lengthAdjust="spacingAndGlyphs">Scale:</text>
<text x="1205" y="469" style="font-size:12px" textLength="55" lengthAdjust="spacingAndGlyphs">Roughness:</text>
<text x="1216" y="490" style="font-size:12px" textLength="44" lengthAdjust="spacingAndGlyphs">Iterations:</text>
<text x="1240" y="545" style="font-size:12px" text-anchor="end">X:</text>
<text x="1240" y="566" style="font-size:12px" text-anchor="end">Y:</text>
<text x="1240" y="587" style="font-size:12px" text-anchor="end">Z:</text>
<text x="1207" y="664" style="font-size:12px" textLength="53" lengthAdjust="spacingAndGlyphs">Frequency:</text>
<rect x="1263" y="388" width="52" height="16" class="f"/><path class="d c" d="M1263 404V389H1315"/><text x="1265" y="400" style="font-size:12px">0</text><use href="#sp" x="1318" y="388"/>
<rect x="1263" y="409" width="52" height="15" class="f"/><path class="d c" d="M1263 424V410H1315"/><text x="1265" y="421" style="font-size:12px">0,09</text><use href="#sp" x="1318" y="409"/>
<rect x="1262.500" y="438.500" width="12" height="12" fill="#e0e0e0"/><path class="c" d="M1262.500 450V438.500H1275" fill="none" stroke="#555" stroke-width="1.500"/><path d="M1265 444L1268 448L1273 440" fill="none" stroke="#000" stroke-width="2"/>
<text x="1280" y="449" style="font-size:12px" textLength="32" lengthAdjust="spacingAndGlyphs">Fractal</text>
<rect x="1263" y="458" width="52" height="15" class="f"/><path class="d c" d="M1263 473V459H1315"/><text x="1265" y="470" style="font-size:12px">0,095</text><use href="#sp" x="1318" y="458"/>
<rect x="1263" y="479" width="52" height="15" class="f"/><path class="d c" d="M1263 494V480H1315"/><text x="1265" y="491" style="font-size:12px">6,0</text><use href="#sp" x="1318" y="479"/>
<rect x="1242" y="533" width="52" height="16" class="f"/><path class="d c" d="M1242 549V534H1294"/><text x="1245" y="545" style="font-size:12px">0,0cm</text><use href="#sp" x="1297" y="533"/>
<rect x="1242" y="554" width="52" height="16" class="f"/><path class="d c" d="M1242 570V555H1294"/><text x="1245" y="566" style="font-size:12px">0,0cm</text><use href="#sp" x="1297" y="554"/>
<rect x="1242" y="576" width="52" height="16" class="f"/><path class="d c" d="M1242 592V577H1294"/><text x="1245" y="588" style="font-size:12px">0,77cm</text><use href="#sp" x="1297" y="576"/>
<rect x="1220.500" y="633.500" width="12" height="12" fill="#e0e0e0"/><path class="c" d="M1220.500 645V633.500H1233" fill="none" stroke="#555" stroke-width="1.500"/>
<text x="1238" y="644" style="font-size:12px" textLength="68" lengthAdjust="spacingAndGlyphs">Animate Noise</text>
<rect x="1263" y="653" width="52" height="16" class="f"/><path class="d c" d="M1263 669V654H1315"/><text x="1265" y="665" style="font-size:12px">0,25</text><use href="#sp" x="1318" y="653"/>
<svg x="1190" y="670" width="150" height="10" viewBox="1190 670 150 10">
<text x="1260" y="683" style="font-size:12px" text-anchor="end">Phase:</text>
<rect x="1263" y="674" width="52" height="16" class="f"/><path class="d c" d="M1263 690V675H1315"/><text x="1265" y="686" style="font-size:12px">0</text>
<use href="#sp" x="1318" y="674"/><path d="M1317.500 678V674.500H1321M1325 674.500H1329V678" fill="none" stroke="#f00"/>
</svg>
<rect x="1176" y="681" width="184" height="2" fill="#e0e0e0" opacity=".7"/>

<!-- taskbar -->
<rect y="738" width="1360" height="30" fill="url(#task)"/>
<path d="M0 739H92Q102 741 102 753Q102 765 92 768H0Z" fill="url(#st)"/>
<g transform="translate(11,744)">
<path d="M1 3Q5 1 8 3L7 8Q4 6 0 8Z" fill="#e8501c"/><path d="M9 3Q12 5 16 3L15 8Q12 10 8 8Z" fill="#7dbb20"/><path d="M0 9Q3 7 7 9L6 14Q3 12 -1 14Z" fill="#3a8aef"/><path d="M8 9Q11 11 15 9L14 14Q11 16 7 14Z" fill="#f4c020"/>
</g>
<text x="35" y="758" style="font-size:16px;font-weight:bold;font-style:italic;fill:#fff" textLength="42" lengthAdjust="spacingAndGlyphs">Inicio</text>
<!-- quick launch -->
<circle cx="122" cy="753" r="5.500" fill="none" stroke="#7cc4ff" stroke-width="2"/><text x="117" y="759" style="font-size:14px;font-style:italic;font-weight:bold;fill:#4fa8f8">e</text>
<rect x="139" y="747" width="12" height="12" rx="2" fill="#e8f0ff" stroke="#1a3a9a"/><path d="M142 753L146 750M142 756H148" stroke="#1a4ac0"/><circle cx="150" cy="748" r="1.500" fill="#e05020"/>
<circle cx="169" cy="753" r="5.500" fill="none" stroke="#4aa8f0" stroke-width="2"/><path d="M172 756L175 759" stroke="#4aa8f0" stroke-width="2"/>
<text x="188" y="750" style="font-size:10px;fill:#b8d0f8">»</text>
<!-- task buttons -->
<rect x="205" y="742" width="158" height="24" rx="2" fill="#1e52b7" stroke="#17428f"/>
<rect x="215" y="746" width="15" height="15" rx="2" fill="#1a8f8f" stroke="#d0e8e8"/><circle cx="222.500" cy="753.500" r="4.500" fill="none" stroke="#e0f0f0" stroke-width="1.600"/>
<text x="234" y="758" style="font-size:12px;fill:#fff" textLength="38" lengthAdjust="spacingAndGlyphs">Untitled</text><text x="290" y="758" style="font-size:12px;fill:#fff" textLength="55" lengthAdjust="spacingAndGlyphs">- Project ...</text>
<rect x="365" y="742" width="158" height="24" rx="2" fill="#3c81f3"/>
<rect x="375" y="746" width="14" height="15" rx="2" fill="#f4f4f4"/><path d="M379 757L386 748" stroke="#d89820" stroke-width="2"/>
<text x="393" y="757" style="font-size:12px;fill:#fff" textLength="85" lengthAdjust="spacingAndGlyphs">Adobe Photoshop</text>
<!-- tray -->
<rect x="1303" y="738" width="57" height="30" fill="url(#tray)"/><path d="M1303.500 738V768" stroke="#0d5bb0"/>
<circle cx="1303" cy="753" r="9" fill="#1a74d8" stroke="#8cc8f4"/><path d="M1306 748L1301 753L1306 758" fill="none" stroke="#fff" stroke-width="2.400"/>
<text x="1319" y="757" style="font-size:12px;fill:#fff" textLength="28" lengthAdjust="spacingAndGlyphs">11:08</text>
</svg>
</body></html>
